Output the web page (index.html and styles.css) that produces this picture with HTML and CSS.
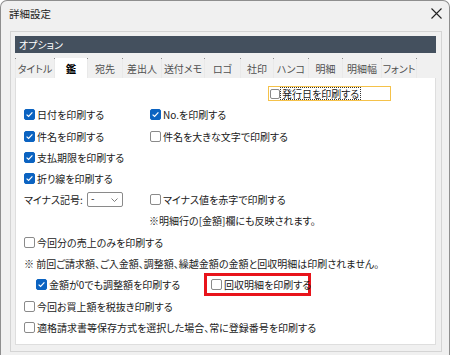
FILE: index.html
```html
<!DOCTYPE html>
<html lang="ja">
<head>
<meta charset="utf-8">
<link rel="stylesheet" href="styles.css">
</head>
<body>
<div class="window">
  <div class="titlebar">
    <span class="title">詳細設定</span>
    <svg class="close" width="11" height="11" viewBox="0 0 11 11"><path d="M0.5 0.5 L10.5 10.5 M10.5 0.5 L0.5 10.5" stroke="#222" stroke-width="1.1" fill="none"/></svg>
  </div>
  <div class="group">
    <div class="group-header">オプション</div>
    <div class="tabs">
      <div class="tab w39">タイトル</div>
      <div class="tab w33 active">鑑</div>
      <div class="tab w35">宛先</div>
      <div class="tab w39">差出人</div>
      <div class="tab w43">送付メモ</div>
      <div class="tab w36">ロゴ</div>
      <div class="tab w33">社印</div>
      <div class="tab w35">ハンコ</div>
      <div class="tab w34">明細</div>
      <div class="tab w39">明細幅</div>
      <div class="tab w36 last">フォント</div>
    </div>
    <div class="panel">
      <div class="rows">
        <div class="row">
          <div class="issue">
            <span class="box small"></span>
            <span class="focus">発行日を印刷する</span>
          </div>
        </div>
        <div class="row">
          <label class="chk col1"><span class="box on"><svg viewBox="0 0 11 11"><path d="M2.6 5.6 L4.6 7.5 L8.4 3.4" stroke="#fff" stroke-width="1.2" fill="none"/></svg></span>日付を印刷する</label>
          <label class="chk"><span class="box on"><svg viewBox="0 0 11 11"><path d="M2.6 5.6 L4.6 7.5 L8.4 3.4" stroke="#fff" stroke-width="1.2" fill="none"/></svg></span>No.を印刷する</label>
        </div>
        <div class="row">
          <label class="chk col1"><span class="box on"><svg viewBox="0 0 11 11"><path d="M2.6 5.6 L4.6 7.5 L8.4 3.4" stroke="#fff" stroke-width="1.2" fill="none"/></svg></span>件名を印刷する</label>
          <label class="chk"><span class="box"></span>件名を大きな文字で印刷する</label>
        </div>
        <div class="row">
          <label class="chk col1"><span class="box on"><svg viewBox="0 0 11 11"><path d="M2.6 5.6 L4.6 7.5 L8.4 3.4" stroke="#fff" stroke-width="1.2" fill="none"/></svg></span>支払期限を印刷する</label>
        </div>
        <div class="row">
          <label class="chk col1"><span class="box on"><svg viewBox="0 0 11 11"><path d="M2.6 5.6 L4.6 7.5 L8.4 3.4" stroke="#fff" stroke-width="1.2" fill="none"/></svg></span>折り線を印刷する</label>
        </div>
        <div class="row">
          <div class="col1 minus">
            <span class="minus-label">マイナス記号:</span>
            <div class="select"><span class="select-val">-</span><svg class="chev" width="7" height="4" viewBox="0 0 7 4"><path d="M0.5 0.5 L3.5 3.5 L6.5 0.5" stroke="#707070" stroke-width="0.9" fill="none"/></svg></div>
          </div>
          <label class="chk"><span class="box"></span>マイナス値を赤字で印刷する</label>
        </div>
        <div class="row">
          <span class="note">※明細行の[金額]欄にも反映されます。</span>
        </div>
        <div class="row">
          <label class="chk"><span class="box"></span>今回分の売上のみを印刷する</label>
        </div>
        <div class="row">
          <span class="warn">※ 前回ご請求額、ご入金額、調整額、繰越金額の金額と回収明細は印刷されません。</span>
        </div>
        <div class="row">
          <label class="chk indent"><span class="box on"><svg viewBox="0 0 11 11"><path d="M2.6 5.6 L4.6 7.5 L8.4 3.4" stroke="#fff" stroke-width="1.2" fill="none"/></svg></span>金額が0でも調整額を印刷する</label>
          <div class="highlight">
            <label class="chk"><span class="box"></span>回収明細を印刷する</label>
          </div>
        </div>
        <div class="row">
          <label class="chk"><span class="box"></span>今回お買上額を税抜き印刷する</label>
        </div>
        <div class="row">
          <label class="chk"><span class="box"></span>適格請求書等保存方式を選択した場合、常に登録番号を印刷する</label>
        </div>
      </div>
    </div>
  </div>
</div>
</body>
</html>
```

FILE: styles.css
```css
* { box-sizing: border-box; }
html, body { margin: 0; padding: 0; }
body {
  width: 450px;
  height: 355px;
  overflow: hidden;
  background: #ffffff;
  font-family: "Noto Sans CJK JP", "Noto Sans", sans-serif;
  font-size: 10px;
  font-feature-settings: "palt";
  color: #1a1a1a;
}
.window {
  width: 450px;
  height: 355px;
  background: #f0f0f0;
  border: 1px solid #8e8e8e;
  border-bottom: none;
  border-radius: 7px 7px 0 0;
  display: flex;
  flex-direction: column;
}
.titlebar {
  height: 24px;
  flex: none;
  display: flex;
  align-items: center;
  justify-content: space-between;
  padding: 0 7px 0 8px;
}
.title { font-size: 10.5px; color: #1a1a1a; }
.close { display: block; }
.group {
  margin: 6px 0 0 9px;
  width: 432px;
  border: 1px solid #d4d4d4;
  padding: 4px 4px 6px 4px;
}
.group-header {
  height: 17px;
  width: 421px;
  background: #44505e;
  color: #ffffff;
  line-height: 17px;
  padding-left: 4px;
}
.tabs {
  margin-top: 5px;
  height: 20px;
  display: flex;
}
.tab {
  height: 20px;
  line-height: 21px;
  text-align: center;
  color: #505050;
  background: #f0f0f0;
  border-left: 1px solid #e8e8e8;
  border-image: linear-gradient(#8a8a8a 0 2px, #e9e9e9 2px) 1;
  white-space: nowrap;
}
.tab.last { border-right: 1px solid #e8e8e8; }
.tab.active { background: #ffffff; color: #000; font-weight: bold; }
.w33 { width: 33px; }
.w34 { width: 34px; }
.w35 { width: 35px; }
.w36 { width: 36px; }
.w39 { width: 39px; }
.w43 { width: 43px; }
.panel {
  width: 421px;
  height: 267px;
  background: #ffffff;
  border: 1px solid #dedede;
  border-top: none;
  padding: 5px 0 0 8px;
}
.rows {
  display: grid;
  grid-template-rows: 21px 21px 22px 21px 21px 21px 21px 22px 21px 21px 22px 21px;
}
.row { display: flex; align-items: center; white-space: nowrap; }
.col1 { width: 126px; flex: none; }
.chk { display: flex; align-items: center; gap: 2px; }
.box {
  width: 11px;
  height: 11px;
  flex: none;
  border: 1px solid #8a8a8a;
  border-radius: 2px;
  background: #ffffff;
  display: block;
}
.box.on { background: #0b63c1; border-color: #0b63c1; }
.box svg { display: block; width: 11px; height: 11px; margin: -1px; }
.issue {
  margin-left: 244px;
  width: 123px;
  height: 15px;
  border: 1px solid #f5c24a;
  display: flex;
  align-items: center;
  gap: 1px;
  padding-left: 1px;
}
.box.small { width: 10px; height: 10px; }
.focus {
  outline: 1px dotted #333;
  line-height: 11px;
  padding: 0 1px;
}
.minus { display: flex; align-items: center; }
.minus-label { width: 63px; }
.select {
  width: 36px;
  height: 15px;
  border: 1px solid #8a8a8a;
  border-radius: 2px;
  background: #fff;
  display: flex;
  align-items: center;
  justify-content: space-between;
  padding: 0 4px 0 3px;
}
.select-val { line-height: 10px; margin-top: -4px; }
.chev { display: block; }
.note { margin-left: 125px; }
.indent { margin-left: 12px; width: 168px; flex: none; }
.highlight {
  height: 23px;
  width: 107px;
  border: 3px solid #e8141b;
  display: flex;
  align-items: center;
  padding-left: 4px;
}
```
